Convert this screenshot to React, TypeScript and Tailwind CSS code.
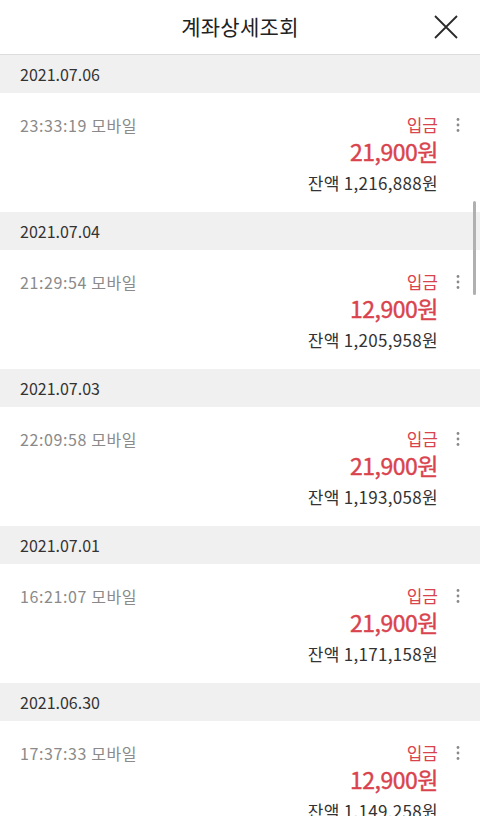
import React from 'react';

const rows = [
  { date: '2021.07.06', time: '23:33:19', amount: '21,900', balance: '1,216,888' },
  { date: '2021.07.04', time: '21:29:54', amount: '12,900', balance: '1,205,958' },
  { date: '2021.07.03', time: '22:09:58', amount: '21,900', balance: '1,193,058' },
  { date: '2021.07.01', time: '16:21:07', amount: '21,900', balance: '1,171,158' },
  { date: '2021.06.30', time: '17:37:33', amount: '12,900', balance: '1,149,258' },
];

function Kebab() {
  return (
    <svg width="6" height="16" viewBox="0 0 6 16" className="text-[#8a8a8a]">
      <circle cx="3" cy="2.5" r="1.4" fill="currentColor" />
      <circle cx="3" cy="8" r="1.4" fill="currentColor" />
      <circle cx="3" cy="13.5" r="1.4" fill="currentColor" />
    </svg>
  );
}

export default function App() {
  return (
    <div
      className="relative h-[816px] w-[480px] overflow-hidden bg-white"
      style={{ fontFamily: '"Noto Sans CJK KR", "Noto Sans", sans-serif' }}
    >
      {/* Header */}
      <header className="relative flex h-[55px] items-center justify-center border-b border-[#dcdcdc]">
        <h1 className="text-[21px] tracking-[0.3px] text-[#222]">계좌상세조회</h1>
        <button className="absolute right-[22px] top-[15px] flex h-[24px] w-[24px] items-center justify-center">
          <svg width="24" height="24" viewBox="0 0 24 24">
            <path d="M1 1 L23 23 M23 1 L1 23" stroke="#2a2a2a" strokeWidth="1.8" fill="none" />
          </svg>
        </button>
      </header>

      {/* List */}
      <div>
        {rows.map((r) => (
          <div key={r.date}>
            <div className="flex h-[38px] items-center bg-[#f0f0f0] pl-5 text-[16px] text-[#333]">
              {r.date}
            </div>
            <div className="flex h-[119px] pl-5 pr-[2px] pt-[21px]">
              <div className="flex-1 text-[16px] leading-[22px] tracking-[0.6px] text-[#8a8a8a]">
                {r.time} 모바일
              </div>
              <div className="flex flex-col items-end text-right">
                <div className="text-[17px] leading-[22px] text-[#d9434e]">입금</div>
                <div className="text-[23px] leading-[30px] tracking-[-0.5px] text-[#d9434e] [-webkit-text-stroke:0.4px_#d9434e]">
                  {r.amount}원
                </div>
                <div className="mt-[6px] text-[17px] leading-[22px] tracking-[0.3px] text-[#333]">
                  잔액 {r.balance}원
                </div>
              </div>
              <div className="flex w-[40px] justify-center pt-[3px]">
                <Kebab />
              </div>
            </div>
          </div>
        ))}
      </div>

      {/* Scrollbar thumb */}
      <div className="absolute right-[4px] top-[201px] h-[94px] w-[3px] rounded-full bg-[#b0b0b0]" />
    </div>
  );
}
